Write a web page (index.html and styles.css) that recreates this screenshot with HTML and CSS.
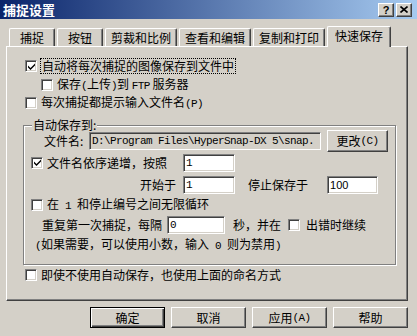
FILE: index.html
```html
<!DOCTYPE html>
<html>
<head>
<meta charset="utf-8">
<link rel="stylesheet" href="styles.css">
</head>
<body>
<div class="window">
  <div class="titlebar">
    <span class="title">捕捉设置</span>
    <div class="title-buttons">
      <div class="tbtn">?</div>
      <div class="tbtn"><svg width="8" height="7" viewBox="0 0 8 7"><path d="M0.5 0.5 L7.5 6.5 M7.5 0.5 L0.5 6.5" stroke="#000" stroke-width="1.6"/></svg></div>
    </div>
  </div>

  <div class="tabs">
    <div class="tab">捕捉</div>
    <div class="tab">按钮</div>
    <div class="tab">剪裁和比例</div>
    <div class="tab">查看和编辑</div>
    <div class="tab">复制和打印</div>
    <div class="tab active">快速保存</div>
  </div>

  <div class="panel">
    <div class="row r1">
      <span class="cb"><svg width="7" height="7" viewBox="0 0 7 7"><path d="M0 2.5 L2.5 5 L7 0.5 L7 2.5 L2.5 7 L0 4.5 Z" fill="#000"/></svg></span>
      <span class="label focus">自动将每次捕捉的图像保存到文件中</span>
    </div>
    <div class="row r2">
      <span class="cb"></span>
      <span class="label">保存<span class="lat">(</span>上传<span class="lat">)</span>到 <span class="lat">FTP</span> 服务器</span>
    </div>
    <div class="row r3">
      <span class="cb"></span>
      <span class="label">每次捕捉都提示输入文件名<span class="lat">(P)</span></span>
    </div>

    <fieldset class="group">
      <legend>自动保存到:</legend>
      <div class="row ra">
        <span class="fname-label">文件名:</span>
        <div class="field fname"><span class="lat">D:\Program Files\HyperSnap-DX 5\snap.</span></div>
        <div class="btn change">更改<span class="lat">(C)</span></div>
      </div>
      <div class="row rb">
        <span class="cb"><svg width="7" height="7" viewBox="0 0 7 7"><path d="M0 2.5 L2.5 5 L7 0.5 L7 2.5 L2.5 7 L0 4.5 Z" fill="#000"/></svg></span>
        <span class="label inc-label">文件名依序递增，按照</span>
        <div class="field num"><span class="lat">1</span></div>
      </div>
      <div class="row rc">
        <span class="start-label">开始于</span>
        <div class="field num"><span class="lat">1</span></div>
        <span class="stop-label">停止保存于</span>
        <div class="field num stop"><span class="val">100</span></div>
      </div>
      <div class="row rd">
        <span class="cb"></span>
        <span class="label">在<span class="lat"> 1 </span>和停止编号之间无限循环</span>
      </div>
      <div class="row re">
        <span>重复第一次捕捉，每隔</span>
        <div class="field interval"><span class="lat">0</span></div>
        <span class="sec">秒，并在</span>
        <span class="cb cb-cont"></span>
        <span class="label">出错时继续</span>
      </div>
      <div class="row rf">
        <span><span class="lat">(</span>如果需要，可以使用小数，输入<span class="lat"> 0 </span>则为禁用<span class="lat">)</span></span>
      </div>
    </fieldset>

    <div class="row rlast">
      <span class="cb"></span>
      <span class="label">即使不使用自动保存，也使用上面的命名方式</span>
    </div>
  </div>

  <div class="buttons">
    <div class="btn default">确定</div>
    <div class="btn">取消</div>
    <div class="btn">应用<span class="lat">(A)</span></div>
    <div class="btn">帮助</div>
  </div>
</div>
</body>
</html>
```

FILE: styles.css
```css
body {
  margin: 0;
  background: #d4d0c8;
  font-family: "Noto Sans CJK SC", "Noto Sans", sans-serif;
  font-size: 12px;
  line-height: 14px;
  color: #000;
}

.window {
  width: 417px;
  height: 336px;
  background: #d4d0c8;
  overflow: hidden;
}

.titlebar {
  height: 19px;
  box-sizing: border-box;
  display: flex;
  align-items: center;
  justify-content: space-between;
  padding: 0 5px 0 3px;
  background: linear-gradient(to right, #0a246a, #a6caf0);
}

.title {
  color: #fff;
  font-weight: bold;
  font-size: 13px;
  line-height: 15px;
}

.title-buttons {
  display: flex;
  gap: 2px;
}

.tbtn {
  width: 16px;
  height: 14px;
  box-sizing: border-box;
  background: #d4d0c8;
  border: 1px solid;
  border-color: #fff #404040 #404040 #fff;
  box-shadow: inset -1px -1px #808080;
  display: flex;
  align-items: center;
  justify-content: center;
  font: bold 11px/10px "Liberation Sans", sans-serif;
}

.tabs {
  display: flex;
  align-items: flex-end;
  gap: 2px;
  height: 20px;
  margin-top: 7px;
  padding-left: 9px;
}

.tab {
  height: 18px;
  min-width: 46px;
  box-sizing: border-box;
  padding: 0 5px;
  display: flex;
  align-items: center;
  justify-content: center;
  border-top: 1px solid #fff;
  border-left: 1px solid #fff;
  border-right: 1px solid #404040;
  box-shadow: inset -1px 0 #808080;
  border-radius: 2px 2px 0 0;
  background: #d4d0c8;
}

.tab.active {
  height: 21px;
  margin-bottom: -1px;
  padding: 0 7px 3px;
  position: relative;
  z-index: 1;
}

.panel {
  width: 402px;
  height: 255px;
  margin-left: 6px;
  box-sizing: border-box;
  padding-top: 10px;
  border: 1px solid;
  border-color: #fff #404040 #404040 #fff;
  box-shadow: inset -1px -1px #808080;
}

.row {
  display: flex;
  align-items: center;
  height: 18px;
  white-space: nowrap;
}

.cb {
  width: 12px;
  height: 12px;
  flex: none;
  box-sizing: border-box;
  background: #fff;
  border: 1px solid;
  border-color: #808080 #fff #fff #808080;
  box-shadow: inset 1px 1px #404040, inset -1px -1px #d4d0c8;
  display: flex;
  align-items: center;
  justify-content: center;
}

.label {
  margin-left: 4px;
}

.focus {
  margin-left: 3px;
  padding: 0 1px;
  border: 1px dotted #000;
}

.lat {
  font-family: "Liberation Mono", monospace;
  font-size: 11px;
  letter-spacing: -0.6px;
}

.r1 { margin-left: 18px; }
.r2 { margin-left: 34px; margin-top: 1px; }
.r3 { margin-left: 18px; }

.group {
  margin: 8px 0 0 16px;
  width: 373px;
  min-width: 0;
  box-sizing: border-box;
  padding: 0 0 10px 0;
  border: 1px solid #808080;
  box-shadow: inset 1px 1px #fff, 1px 1px #fff;
}

.group legend {
  margin-left: 8px;
  padding: 0 1px;
  height: 10px;
  line-height: 10px;
  background: #d4d0c8;
}

.field {
  height: 18px;
  box-sizing: border-box;
  flex: none;
  background: #fff;
  border: 1px solid;
  border-color: #808080 #fff #fff #808080;
  box-shadow: inset 1px 1px #404040, inset -1px -1px #d4d0c8;
  padding-left: 2px;
  display: flex;
  align-items: center;
  overflow: hidden;
  white-space: nowrap;
}

.ra { height: 22px; padding-left: 20px; }
.fname-label { width: 45px; }
.fname { width: 232px; background: #d4d0c8; }

.btn {
  width: 75px;
  height: 21px;
  box-sizing: border-box;
  background: #d4d0c8;
  border: 1px solid;
  border-color: #fff #404040 #404040 #fff;
  box-shadow: inset -1px -1px #808080;
  display: flex;
  align-items: center;
  justify-content: center;
  white-space: nowrap;
}

.btn.change {
  width: 61px;
  height: 22px;
  margin-left: 6px;
}

.btn.default {
  border: 1px solid #000;
  box-shadow: inset 1px 1px #fff, inset -1px -1px #404040, inset -2px -2px #808080;
}

.rb { margin-top: 1px; height: 19px; padding-left: 7px; }
.inc-label { width: 136px; }
.num { width: 52px; }
.num.stop { width: 51px; margin-left: 19px; }
.val { font-family: "Liberation Sans", sans-serif; font-size: 11px; }

.rc { margin-top: 3px; height: 19px; }
.start-label { width: 152px; text-align: right; margin-right: 7px; }
.stop-label { margin-left: 13px; }

.rd { margin-top: 2px; padding-left: 7px; }

.re { margin-top: 1px; height: 19px; padding-left: 18px; }
.interval { width: 58px; margin-left: 5px; }
.sec { margin-left: 8px; }
.cb-cont { margin-left: 7px; }
.re .label { margin-left: 6px; }

.rf { margin-top: 2px; padding-left: 11px; }

.rlast { margin-top: 1px; margin-left: 18px; }

.buttons {
  display: flex;
  justify-content: flex-end;
  gap: 6px;
  padding-right: 9px;
  margin-top: 6px;
}
```
